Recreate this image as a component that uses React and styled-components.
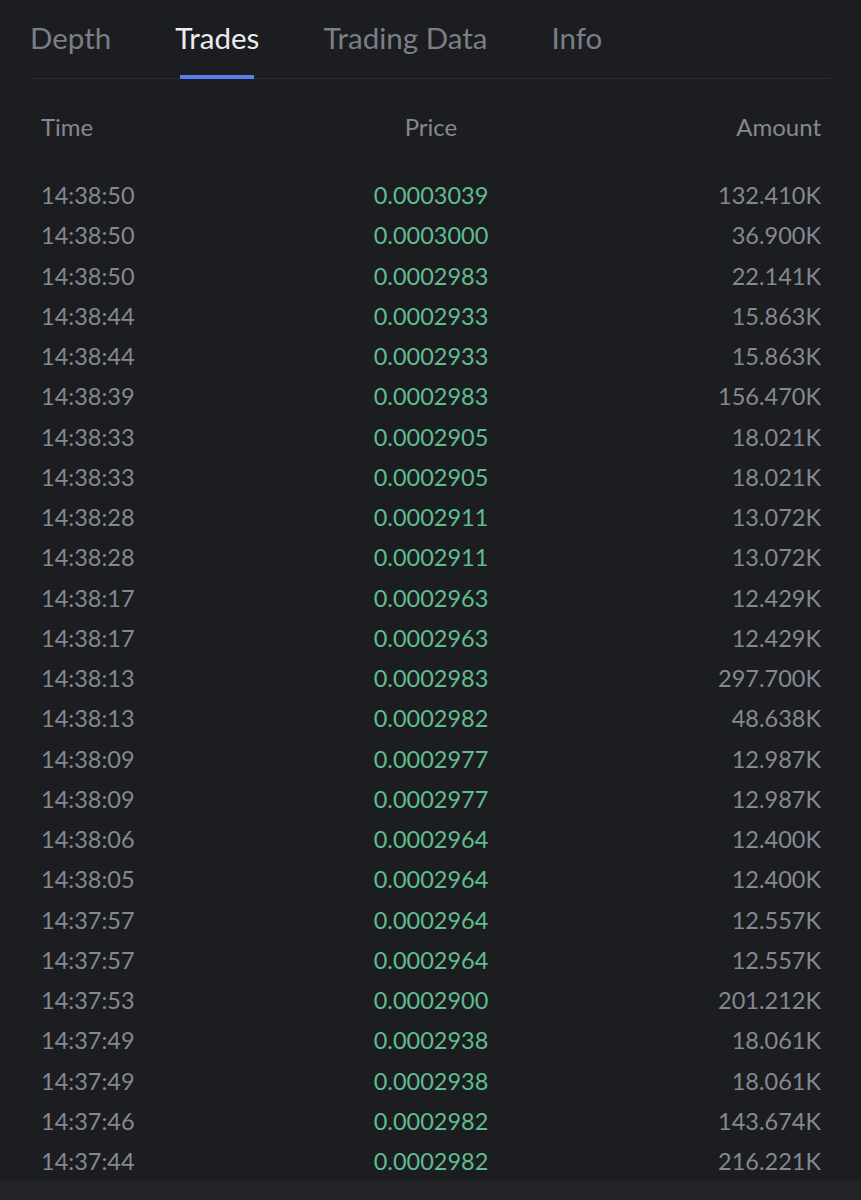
import React from "react";
import styled, { createGlobalStyle } from "styled-components";

const GlobalStyle = createGlobalStyle`
  html, body {
    margin: 0;
    padding: 0;
    background: #1c1d21;
  }
  body {
    font-family: "Lato", "Open Sans", sans-serif;
  }
`;

const trades = [
  ["14:38:50", "0.0003039", "132.410K"],
  ["14:38:50", "0.0003000", "36.900K"],
  ["14:38:50", "0.0002983", "22.141K"],
  ["14:38:44", "0.0002933", "15.863K"],
  ["14:38:44", "0.0002933", "15.863K"],
  ["14:38:39", "0.0002983", "156.470K"],
  ["14:38:33", "0.0002905", "18.021K"],
  ["14:38:33", "0.0002905", "18.021K"],
  ["14:38:28", "0.0002911", "13.072K"],
  ["14:38:28", "0.0002911", "13.072K"],
  ["14:38:17", "0.0002963", "12.429K"],
  ["14:38:17", "0.0002963", "12.429K"],
  ["14:38:13", "0.0002983", "297.700K"],
  ["14:38:13", "0.0002982", "48.638K"],
  ["14:38:09", "0.0002977", "12.987K"],
  ["14:38:09", "0.0002977", "12.987K"],
  ["14:38:06", "0.0002964", "12.400K"],
  ["14:38:05", "0.0002964", "12.400K"],
  ["14:37:57", "0.0002964", "12.557K"],
  ["14:37:57", "0.0002964", "12.557K"],
  ["14:37:53", "0.0002900", "201.212K"],
  ["14:37:49", "0.0002938", "18.061K"],
  ["14:37:49", "0.0002938", "18.061K"],
  ["14:37:46", "0.0002982", "143.674K"],
  ["14:37:44", "0.0002982", "216.221K"],
];

const tabs = ["Depth", "Trades", "Trading Data", "Info"];

function App() {
  return (
    <>
      <GlobalStyle />
      <Page>
        <TabBar>
          {tabs.map((t) => (
            <Tab key={t} active={t === "Trades"}>
              {t}
            </Tab>
          ))}
        </TabBar>
        <Table>
          <HeadRow>
            <Cell>Time</Cell>
            <Cell align="center">Price</Cell>
            <Cell align="right">Amount</Cell>
          </HeadRow>
          {trades.map((r, i) => (
            <Row key={i}>
              <Cell>{r[0]}</Cell>
              <Cell align="center" green>
                {r[1]}
              </Cell>
              <Cell align="right">{r[2]}</Cell>
            </Row>
          ))}
        </Table>
        <Footer />
      </Page>
    </>
  );
}

export default App;

const Page = styled.div`
  width: 861px;
  height: 1200px;
  background: #1c1d21;
  display: flex;
  flex-direction: column;
  overflow: hidden;
`;

const TabBar = styled.div`
  display: flex;
  margin: 0 31px 0 30px;
  border-bottom: 1px solid #2b2d32;
  height: 78px;
  align-items: flex-start;
`;

const Tab = styled.div`
  position: relative;
  font-size: 29.5px;
  line-height: 76px;
  height: 78px;
  margin-right: 64px;
  color: ${(p) => (p.active ? "#ececee" : "#7b7e87")};
  &::after {
    content: "";
    display: ${(p) => (p.active ? "block" : "none")};
    position: absolute;
    left: 5px;
    right: 5px;
    bottom: -1px;
    height: 4px;
    background: #5a7ff0;
  }
`;

const Table = styled.div`
  flex: 1;
  padding: 0 40px 0 41px;
`;

const RowBase = styled.div`
  display: grid;
  grid-template-columns: 1fr 1fr 1fr;
  align-items: center;
  font-size: 23.5px;
  color: #858891;
`;

const HeadRow = styled(RowBase)`
  height: 40px;
  margin-top: 27px;
  margin-bottom: 29px;
  font-size: 24px;
`;

const Row = styled(RowBase)`
  height: 40.25px;
`;

const Cell = styled.div`
  text-align: ${(p) => p.align || "left"};
  color: ${(p) => (p.green ? "#5fbd8e" : "inherit")};
  white-space: nowrap;
`;

const Footer = styled.div`
  height: 20px;
  background: #212327;
`;
